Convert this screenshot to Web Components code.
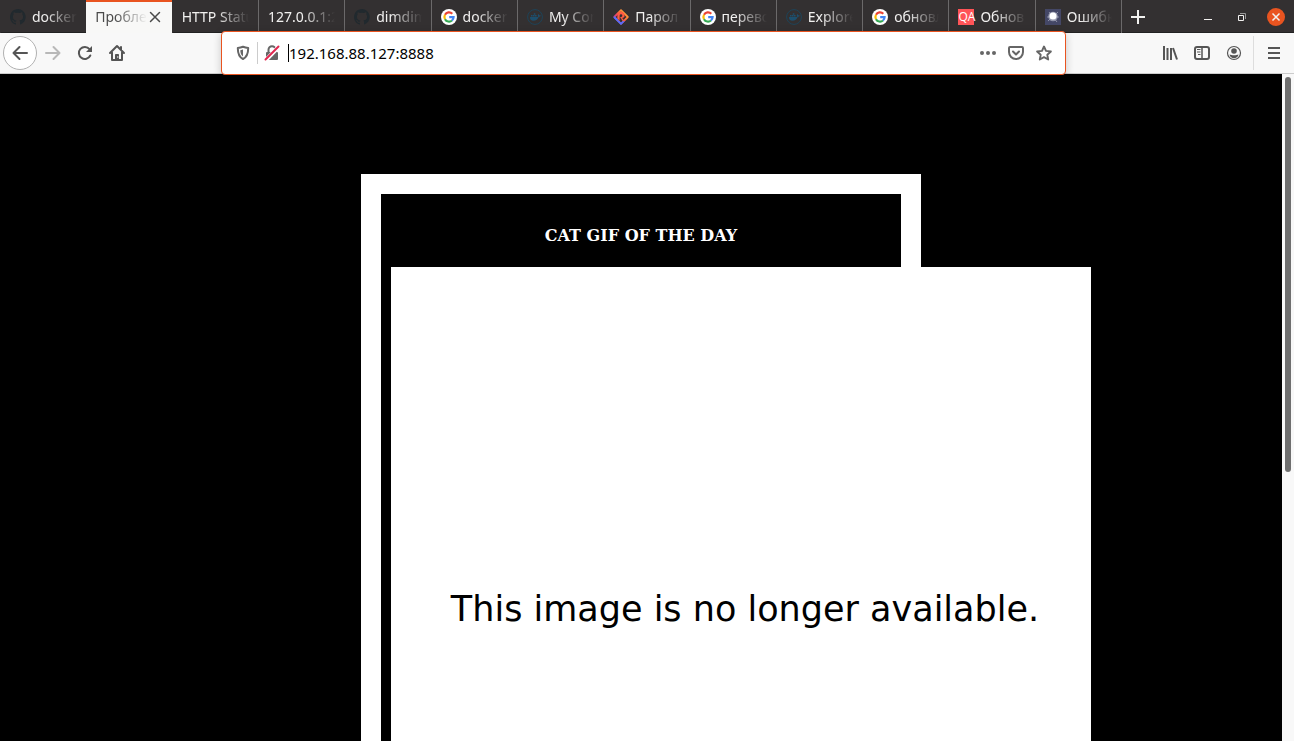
<!DOCTYPE html>
<html lang="ru">
<head>
<meta charset="utf-8">
<title>Cat gif of the day</title>
<style>
html,body{margin:0;height:100%}
body{background:#000;font:14px/20px "Noto Sans","Open Sans",sans-serif;overflow:hidden}
</style>
</head>
<body>
<browser-window>
  <tab-strip slot="tabs">
    <browser-tab plain icon="github">docker_</browser-tab>
    <browser-tab active>Проблема</browser-tab>
    <browser-tab plain>HTTP Status</browser-tab>
    <browser-tab>127.0.0.1:27</browser-tab>
    <browser-tab icon="github">dimdim</browser-tab>
    <browser-tab icon="google">docker</browser-tab>
    <browser-tab icon="docker">My Con</browser-tab>
    <browser-tab icon="hub">Парол</browser-tab>
    <browser-tab icon="google">перево</browser-tab>
    <browser-tab icon="docker">Explore</browser-tab>
    <browser-tab icon="google">обновл</browser-tab>
    <browser-tab icon="qa">Обнов</browser-tab>
    <browser-tab icon="nova">Ошибка</browser-tab>
  </tab-strip>
  <nav-bar slot="nav"></nav-bar>
  <cat-page slot="page">CAT GIF OF THE DAY</cat-page>
</browser-window>
<script>
const ICONS = {
  github:'<path fill="#21292e" d="M8 0C3.6 0 0 3.6 0 8c0 3.500 2.300 6.500 5.500 7.600.4.1.5-.2.500-.4v-1.500c-2 .4-2.600-.5-2.700-1-.1-.2-.5-.9-.8-1.100-.3-.1-.7-.5 0-.5.600 0 1.100.6 1.200.8.7 1.200 1.900.9 2.300.7.1-.5.3-.9.5-1.100-1.800-.2-3.600-.9-3.600-4 0-.9.3-1.600.8-2.100-.1-.2-.4-1 .1-2.100 0 0 .7-.2 2.200.8a7.400 7.400 0 014 0c1.500-1 2.200-.8 2.200-.8.4 1.100.2 1.900.1 2.100.5.6.8 1.300.8 2.100 0 3.100-1.900 3.700-3.700 3.900.3.3.6.8.6 1.500v2.200c0 .2.1.5.5.4A8 8 0 008 0z"/>',
  google:'<circle cx="8" cy="8" r="8" fill="#fff"/><g fill="none" stroke-width="2.200"><path stroke="#ea4335" d="M4 5.800A4.600 4.600 0 0 1 11.300 4.700"/><path stroke="#fbbc05" d="M4 10.200A4.600 4.600 0 0 1 4 5.800"/><path stroke="#34a853" d="M11 11.500A4.600 4.600 0 0 1 4 10.200"/><path stroke="#4285f4" d="M8.200 8.100h4.400A4.600 4.600 0 0 1 11 11.500"/></g>',
  docker:'<circle cx="8" cy="8" r="7.400" fill="none" stroke="#1d4358"/><path fill="#1d4f6d" d="M3 8h7.200c.6 0 .9-.5.9-1-.4-.8-.2-1.400.3-2 .6.4.8.900.8 1.400.6-.1 1.200 0 1.500.3-.4.8-1 1.100-1.900 1.100-1 2.700-2.700 4-5.400 4C4.200 11.800 2.800 10.500 3 8zM4 6h1.600v1.600H4zM6 6h1.600v1.600H6zM8 6h1.600v1.600H8zM6.800 4.200h1.600v1.500H6.800z"/>',
  hub:'<defs><linearGradient id="g" x1="1" y1="0" x2="0" y2="1"><stop stop-color="#ffc43d"/><stop offset=".4" stop-color="#ff7138"/><stop offset=".6" stop-color="#ee4065"/><stop offset="1" stop-color="#4b6cff"/></linearGradient></defs><path d="M8 1.200 14.800 8 8 14.800 1.200 8z" fill="none" stroke="url(#g)" stroke-width="1.800" stroke-linejoin="round"/><path d="M1.200 8 8 14.800l3-3" fill="none" stroke="#536dff" stroke-width="1.800"/><path d="M6 11.500V6.700a2 2 0 1 1 2.200 2L10.600 12M5 10V6.500a3 3 0 1 1 5.300 1.900" fill="none" stroke="#ff5a43" stroke-width="1.300"/>',
  nova:'<path fill="#444766" d="M0 0h16v16H0z"/><circle cx="8" cy="7.500" r="4.800" fill="#9295aa"/><path stroke="#adb0c3" stroke-width=".7" d="M3 12 13 3M4 3l8 10M2 8h12"/><circle cx="8" cy="7" r="3.500" fill="#fff"/>',
  close:'<path d="m3.500 3.500 9 9m0-9-9 9" stroke="currentColor" stroke-width="1.500" stroke-linecap="round"/>',
  plus:'<path d="M8 1v14M1 8h14" stroke="currentColor" stroke-width="2"/>',
  min:'<path d="M4 10.500h8" stroke="currentColor"/>',
  restore:'<path d="M4.500 6.500h5v5h-5z" fill="none" stroke="currentColor"/><path d="M6 4.500h5.500V10" fill="none" stroke="#999"/>',
  quit:'<path d="m4.500 4.500 7 7m0-7-7 7" stroke="currentColor" stroke-width="1.500"/>',
  back:'<path d="M15 8H1.500M7.500 2l-6 6 6 6" fill="none" stroke="currentColor" stroke-width="2" stroke-linecap="round" stroke-linejoin="round"/>',
  forward:'<path d="M1 8h13.500M8.500 2l6 6-6 6" fill="none" stroke="currentColor" stroke-width="2" stroke-linecap="round" stroke-linejoin="round"/>',
  reload:'<path d="M13.300 10.500a6 6 0 1 1-.8-6.400" fill="none" stroke="currentColor" stroke-width="2" stroke-linecap="round"/><path d="M15 1v6H9z" fill="currentColor"/>',
  home:'<path d="m1 8 7-7 7 7M3 7.500V15h10V7.500M12 2v3" fill="none" stroke="currentColor" stroke-width="2" stroke-linecap="round" stroke-linejoin="round"/><path d="M6.500 14V9.500h3V14" fill="currentColor" stroke="currentColor" stroke-linejoin="round"/><circle cx="8.800" cy="12" r=".7" fill="#fff"/>',
  shield:'<path d="M8 1.800c2 .8 4 1.100 5.200 1.200 0 5.500-1 9-5.200 11-4.200-2-5.200-5.500-5.200-11C4 2.900 6 2.600 8 1.800z" fill="none" stroke="currentColor" stroke-width="2" stroke-linejoin="round"/><path d="M8 4.500v7C6 10 5.400 8 5.300 5.200z" fill="currentColor"/>',
  lock:'<path d="M4.500 8V4.800a3.500 3.500 0 0 1 7 0V8" fill="none" stroke="currentColor" stroke-width="2"/><rect x="2" y="7" width="12" height="8" rx="1" fill="currentColor"/><path d="M1.500 15.500 15 1.500" stroke="#fff" stroke-width="4"/><path d="M1.500 14.500 14.500 1.500" stroke="#e22850" stroke-width="2" stroke-linecap="round"/>',
  dots:'<g fill="currentColor"><circle cx="2" cy="8" r="2"/><circle cx="8" cy="8" r="2"/><circle cx="14" cy="8" r="2"/></g>',
  pocket:'<path d="M2 2h12a1 1 0 0 1 1 1v4a7 7 0 0 1-14 0V3a1 1 0 0 1 1-1z" fill="none" stroke="currentColor" stroke-width="2"/><path d="m5 6.500 3 3 3-3" fill="none" stroke="currentColor" stroke-width="2" stroke-linecap="round" stroke-linejoin="round"/>',
  star:'<path d="m8 1.500 2 4.400 4.900.6-3.600 3.300.9 4.700L8 12.200l-4.200 2.300.9-4.700L1.100 6.500 6 5.900z" fill="none" stroke="currentColor" stroke-width="1.900" stroke-linejoin="round"/>',
  library:'<path d="M2 1v14M5.500 3v12M9 3v12M11 3l4 11.500" stroke="currentColor" stroke-width="2"/>',
  sidebar:'<rect x="1" y="2" width="14" height="12" rx="2" fill="none" stroke="currentColor" stroke-width="2"/><path d="M8 2v12" stroke="currentColor" stroke-width="1.500"/><path d="M3 4.500h3.500M3 7h3.500M4 9.500h2.500" stroke="currentColor"/>',
  account:'<circle cx="8" cy="8" r="6.500" fill="none" stroke="currentColor" stroke-width="1.200"/><circle cx="8" cy="6" r="2.800" fill="currentColor"/><path d="M3.500 9.500c2 1 7 1 9 0-.5 2.500-2.500 3.700-4.500 3.700s-4-1.200-4.500-3.700z" fill="currentColor"/>',
  menu:'<path d="M2 3h12M2 8h12M2 13h12" stroke="currentColor" stroke-width="2"/>'
};
function define(name, html, setup) {
  const template = document.createElement('template');
  template.innerHTML = html;
  customElements.define(name, class extends HTMLElement {
    connectedCallback() {
      if (this.shadowRoot) return;
      this.attachShadow({mode:'open'}).append(template.content.cloneNode(true));
      if (setup) setup(this, this.shadowRoot);
    }
  });
}

define('ui-icon', `<style>
  :host{display:block;flex:none;width:16px;height:16px}
  svg{display:block;width:16px;height:16px;overflow:visible}
  .qa{background:#ff5457;color:#fff;height:16px;text-align:center;font:12px/16px "Open Sans",sans-serif}
</style><div id="art"></div>`, (host, root) => {
  const name = host.getAttribute('name');
  root.getElementById('art').innerHTML = name === 'qa'
    ? '<div class="qa">QA</div>'
    : `<svg viewBox="0 0 16 16" aria-hidden="true">${ICONS[name]}</svg>`;
});

define('icon-button', `<style>
  :host{display:block;flex:none;width:32px;height:32px}
  button{display:grid;place-items:center;width:100%;height:100%;padding:0;border:0;border-radius:2px;background:none;color:inherit}
  :host([round]){width:34px;height:34px}
  :host([round]) button{box-sizing:border-box;border:1px solid #b1b1b1;border-radius:50%;background:#fff}
  :host([narrow]){width:28px}
  :host([window]){width:34px}
  :host([small]){width:16px;height:16px}
  :host([quit]) button{width:18px;height:18px;margin:7px auto;border-radius:50%;background:#e95420}
</style><button type="button"></button>`, (host, root) => {
  const button = root.querySelector('button');
  button.setAttribute('aria-label', host.getAttribute('label'));
  button.disabled = host.hasAttribute('disabled');
  button.innerHTML = `<ui-icon name="${host.getAttribute('icon')}"></ui-icon>`;
});

define('browser-window', `<style>
  :host{display:flex;flex-direction:column;height:100%}
  main{flex:1;min-height:0;display:flex}
  .page{flex:1;min-width:0;overflow:hidden}
  .track{flex:none;width:6px;padding:3px;background:#f8f8f8}
  .thumb{height:calc(60% - 2px);border-radius:3px;background:#6f6f6f}
</style>
<slot name="tabs"></slot><slot name="nav"></slot>
<main><div class="page"><slot name="page"></slot></div><div class="track"><div class="thumb"></div></div></main>`);

define('tab-strip', `<style>
  :host{display:flex;flex:none;height:33px;background:#333031;color:#f2f1f0}
  .tabs{flex:1;min-width:0;display:flex}
  .end{flex:none;display:flex;justify-content:space-between;align-items:center;box-sizing:border-box;width:173px;padding-right:1px;border-left:1px solid #6b696a;box-shadow:inset 0 -1px #222}
  .controls{display:flex}
</style>
<div class="tabs" role="tablist"><slot></slot></div>
<div class="end"><icon-button icon="plus" label="Новая вкладка"></icon-button>
<div class="controls"><icon-button window icon="min" label="Свернуть"></icon-button><icon-button window icon="restore" label="Восстановить"></icon-button><icon-button window quit icon="quit" label="Закрыть"></icon-button></div></div>`);

define('browser-tab', `<style>
  :host{flex:1 1 0;min-width:0;box-sizing:border-box;display:flex;align-items:center;padding-right:9px;border-left:1px solid #6b696a;box-shadow:inset 0 -1px #222}
  :host([plain]){border-left-color:#333031}
  :host([active]){background:#f8f8f7;color:#4a4a4a;border-left:0;box-shadow:none;border-top:2px solid #e95420;padding-bottom:2px}
  button{flex:1;min-width:0;display:flex;align-items:center;gap:6px;height:100%;padding:0 0 0 9px;border:0;background:none;color:inherit;font:inherit;text-align:left}
  .label{flex:1;min-width:0;overflow:hidden;white-space:nowrap;-webkit-mask-image:linear-gradient(to left,transparent,#000 32px);mask-image:linear-gradient(to left,transparent,#000 32px)}
</style><button type="button" role="tab"><span class="label"><slot></slot></span></button>`, (host, root) => {
  const active = host.hasAttribute('active');
  const button = root.querySelector('button');
  button.setAttribute('aria-selected', active);
  if (host.hasAttribute('icon')) button.insertAdjacentHTML('afterbegin', `<ui-icon name="${host.getAttribute('icon')}"></ui-icon>`);
  if (active) button.insertAdjacentHTML('afterend', '<icon-button small icon="close" label="Закрыть вкладку"></icon-button>');
});

define('nav-bar', `<style>
  :host{flex:none;display:flex;align-items:center;height:40px;padding-left:3px;border-bottom:1px solid #ccc;background:#f8f8f8;color:#555;position:relative;z-index:1}
  .off{color:#b8b8b8}
  url-field{flex:1;margin:-2px 88px}
  .rule{width:1px;height:34px;margin:0 4px 0 3px;background:#ddd}
  .last{margin-right:4px}
</style>
<icon-button round icon="back" label="Назад"></icon-button>
<icon-button class="off" disabled icon="forward" label="Вперёд"></icon-button>
<icon-button icon="reload" label="Обновить"></icon-button>
<icon-button icon="home" label="Домой"></icon-button>
<url-field></url-field>
<icon-button icon="library" label="Библиотека"></icon-button>
<icon-button icon="sidebar" label="Боковая панель"></icon-button>
<icon-button icon="account" label="Аккаунт"></icon-button>
<span class="rule"></span>
<icon-button class="last" icon="menu" label="Меню"></icon-button>`);

define('url-field', `<style>
  :host{box-sizing:border-box;min-width:0;height:44px;display:flex;align-items:center;padding:0 7px 0 13px;border:1px solid #e95420;border-radius:4px;background:#fff;box-shadow:0 2px 8px #0003;color:#666}
  .rule{width:1px;height:22px;margin:0 6px;background:#ccc}
  .caret{width:1px;height:18px;margin-left:8px;background:#000}
  input{flex:1;min-width:0;padding:0;border:0;outline:0;background:none;color:#000;font:15px/24px "Noto Sans","Open Sans",sans-serif}
</style>
<ui-icon name="shield"></ui-icon><span class="rule"></span><ui-icon name="lock"></ui-icon><span class="caret"></span>
<input type="text" aria-label="Адрес" value="192.168.88.127:8888" spellcheck="false">
<icon-button narrow icon="dots" label="Действия"></icon-button><icon-button narrow icon="pocket" label="Pocket"></icon-button><icon-button narrow icon="star" label="Закладка"></icon-button>`);

define('cat-page', `<style>
  :host{display:block;padding-top:100px;color:#fff;font:16px/19px "DejaVu Serif",serif}
  .card{width:500px;margin:0 auto;padding:10px;border:20px solid #fff}
  h4{margin:22px 0;font:inherit;font-weight:bold;text-align:center}
</style>
<div class="card"><h4><slot></slot></h4><missing-image></missing-image></div>`);

define('missing-image', `<style>
  :host{display:flex;align-items:center;justify-content:center;box-sizing:border-box;width:700px;height:684px;padding-left:8px;background:#fff;color:#000}
  p{margin:0;font:35px/44px "DejaVu Sans",sans-serif;white-space:nowrap}
</style><p>This image is no longer available.</p>`);
</script>
</body>
</html>
